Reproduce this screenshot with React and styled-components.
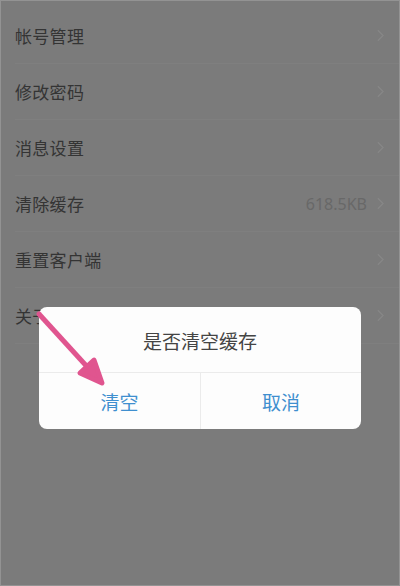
import styled, { createGlobalStyle } from 'styled-components';

const GlobalStyle = createGlobalStyle`
  html, body {
    margin: 0;
    padding: 0;
    background: #7b7b7b;
  }
  body {
    font-family: "Noto Sans CJK SC", "Noto Sans", sans-serif;
  }
`;

const rows = [
  { label: '帐号管理' },
  { label: '修改密码' },
  { label: '消息设置' },
  { label: '清除缓存', value: '618.5KB' },
  { label: '重置客户端' },
  { label: '关于我们' },
];

export default function App() {
  return (
    <>
      <GlobalStyle />
      <Screen>
        <List>
          {rows.map((row) => (
            <Row key={row.label}>
              <RowLabel>{row.label}</RowLabel>
              <RowRight>
                {row.value && <RowValue>{row.value}</RowValue>}
                <Chevron viewBox="0 0 8 14">
                  <path d="M1 1l6 6-6 6" />
                </Chevron>
              </RowRight>
            </Row>
          ))}
        </List>

        <Dialog>
          <DialogTitle>是否清空缓存</DialogTitle>
          <DialogButtons>
            <DialogButton>清空</DialogButton>
            <DialogButton>取消</DialogButton>
          </DialogButtons>
        </Dialog>

        {/* pink annotation arrow pointing at 清空 */}
        <Arrow viewBox="0 0 80 85">
          <path d="M8 8L60 65" />
          <polygon points="71,77 63,54 49,67" />
        </Arrow>
      </Screen>
    </>
  );
}

const Screen = styled.div`
  position: relative;
  width: 400px;
  height: 586px;
  box-sizing: border-box;
  border: 1px solid #939393;
  background: #7b7b7b;
  overflow: hidden;
`;

const List = styled.div`
  display: flex;
  flex-direction: column;
  padding-top: 7px;
`;

const Row = styled.div`
  height: 56px;
  display: flex;
  align-items: center;
  justify-content: space-between;
  margin-left: 14px;
  padding-right: 15px;
  box-sizing: border-box;
  border-bottom: 1px solid #7f7f7f;
`;

const RowLabel = styled.span`
  font-size: 17px;
  color: #343434;
  letter-spacing: 0.3px;
`;

const RowRight = styled.div`
  display: flex;
  align-items: center;
  gap: 10px;
`;

const RowValue = styled.span`
  font-family: "Noto Sans", sans-serif;
  font-size: 16px;
  color: #686868;
`;

const Chevron = styled.svg`
  width: 7px;
  height: 13px;
  fill: none;
  stroke: #878787;
  stroke-width: 1.3;
`;

const Dialog = styled.div`
  position: absolute;
  left: 38px;
  top: 306px;
  width: 322px;
  height: 122px;
  background: #fdfdfd;
  border-radius: 8px;
  display: flex;
  flex-direction: column;
  overflow: hidden;
`;

const DialogTitle = styled.div`
  height: 66px;
  display: flex;
  align-items: center;
  justify-content: center;
  font-size: 19px;
  color: #444444;
  border-bottom: 1px solid #ebebeb;
  box-sizing: border-box;
  padding-top: 2px;
`;

const DialogButtons = styled.div`
  flex: 1;
  display: grid;
  grid-template-columns: 1fr 1fr;
`;

const DialogButton = styled.div`
  display: flex;
  align-items: center;
  justify-content: center;
  font-size: 19px;
  color: #3f8fcf;
  & + & {
    border-left: 1px solid #ebebeb;
  }
`;

const Arrow = styled.svg`
  position: absolute;
  left: 30px;
  top: 305px;
  width: 80px;
  height: 85px;
  fill: #e0558f;
  stroke: #e0558f;
  stroke-width: 5;
  stroke-linecap: round;
  stroke-linejoin: round;
`;
